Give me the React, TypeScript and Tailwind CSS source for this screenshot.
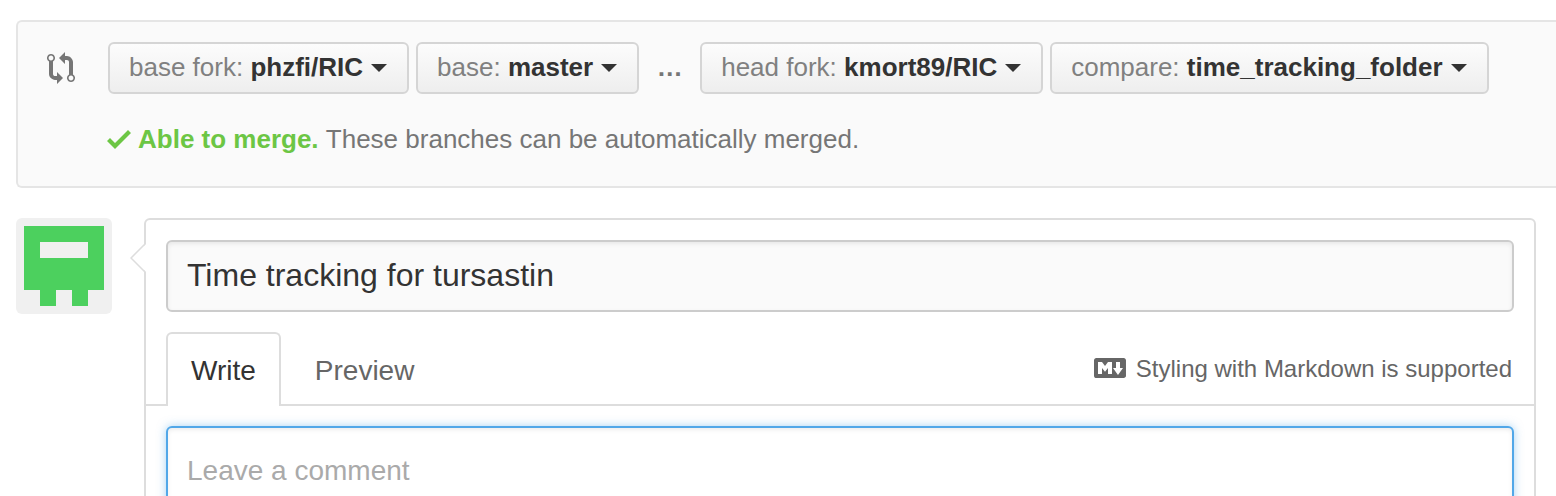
import React from "react";

function CompareIcon() {
  return (
    <svg aria-hidden="true" viewBox="0 0 14 16" className="h-8 w-7 shrink-0 fill-[#767676]">
      <path d="M5 12H4c-.27-.02-.48-.11-.69-.31-.21-.2-.3-.42-.31-.69V4.72A1.993 1.993 0 0 0 2 1a1.993 1.993 0 0 0-1 3.72V11c.03.78.34 1.47.94 2.06.6.59 1.28.91 2.06.94h1v2l3-3-3-3v2zM2 1.8c.66 0 1.2.55 1.2 1.2 0 .65-.55 1.2-1.2 1.2C1.35 4.2.8 3.65.8 3c0-.65.55-1.2 1.2-1.2zm11 9.48V5c-.03-.78-.34-1.47-.94-2.06-.6-.59-1.28-.91-2.06-.94H9V0L6 3l3 3V4h1c.27.02.48.11.69.31.21.2.3.42.31.69v6.28A1.993 1.993 0 0 0 12 15a1.993 1.993 0 0 0 1-3.72zm-1 2.92c-.66 0-1.2-.55-1.2-1.2 0-.65.55-1.2 1.2-1.2.65 0 1.2.55 1.2 1.2 0 .65-.55 1.2-1.2 1.2z" />
    </svg>
  );
}

function CheckIcon() {
  return (
    <svg aria-hidden="true" viewBox="0 0 12 16" className="h-8 w-6 shrink-0 fill-[#6cc644]">
      <path d="M12 5l-8 8-4-4 1.5-1.5L4 10l6.5-6.5z" />
    </svg>
  );
}

function MarkdownIcon() {
  return (
    <svg aria-hidden="true" viewBox="0 0 16 16" className="size-8 shrink-0 fill-[#666666]">
      <path
        fillRule="evenodd"
        d="M14.85 3H1.15C.52 3 0 3.52 0 4.15v7.69C0 12.48.52 13 1.15 13h13.69c.64 0 1.15-.52 1.15-1.15v-7.7C16 3.52 15.48 3 14.85 3zM9 11H7V8L5.5 9.92 4 8v3H2V5h2l1.5 2L7 5h2v6zm2.99.5L9.5 8H11V5h2v3h1.5l-2.51 3.5z"
      />
    </svg>
  );
}

function BranchButton({ label, value }: { label: string; value: string }) {
  return (
    <button
      type="button"
      className="flex h-[52px] items-center rounded-md border-2 border-[#d5d5d5] bg-linear-to-b from-[#fcfcfc] to-[#eeeeee] pr-5 pl-[19px] text-[26px] whitespace-nowrap"
    >
      <span className="pb-0.5 text-[#808080]">{label}:&nbsp;</span>
      <span className="pb-0.5 font-bold text-[#333333]">{value}</span>
      <svg aria-hidden="true" viewBox="0 0 16 8" className="ml-2 h-2 w-4 fill-[#333333]">
        <path d="M0 0h16L8 8z" />
      </svg>
    </button>
  );
}

function Avatar() {
  return (
    <svg role="img" aria-label="Avatar" viewBox="0 0 96 96" className="size-24 shrink-0 rounded-md bg-[#f0f0f0]">
      <path
        fill="#4cd05e"
        fillRule="evenodd"
        d="M8 8h80v64H72v16H56V72H40v16H24V72H8zM24 24v16h48V24z"
      />
    </svg>
  );
}

export default function App() {
  return (
    <main className="h-screen overflow-hidden bg-white pt-5 pl-4 font-['Liberation_Sans',Arial,sans-serif]">
      <section className="flex h-[168px] gap-8 rounded-l-md border-2 border-r-0 border-[#e5e5e5] bg-[#fafafa] pt-5 pl-[29px]">
        <div className="flex h-[52px] items-center">
          <CompareIcon />
        </div>
        <div>
          <div className="flex items-center gap-[7px] pl-px">
            <BranchButton label="base fork" value="phzfi/RIC" />
            <BranchButton label="base" value="master" />
            <span className="w-[47px] pb-0.5 text-center text-[26px] font-bold text-[#767676]">…</span>
            <BranchButton label="head fork" value="kmort89/RIC" />
            <BranchButton label="compare" value="time_tracking_folder" />
          </div>
          <p className="mt-[27px] flex items-center text-[26px] leading-9 whitespace-nowrap text-[#767676]">
            <CheckIcon />
            <strong className="ml-[7px] text-[#6cc644]">Able to merge.</strong>
            <span>&nbsp;These branches can be automatically merged.</span>
          </p>
        </div>
      </section>

      <div className="mt-[30px] mr-5 flex gap-8">
        <Avatar />
        <form className="relative min-w-0 flex-1 rounded-md border-2 border-[#dddddd]">
          <svg aria-hidden="true" viewBox="0 0 16 28" className="absolute top-6 -left-4 h-7 w-4">
            <path d="M16 0L2 14l14 14z" fill="#ffffff" />
            <path d="M15 0L1 14l14 14" fill="none" stroke="#dddddd" strokeWidth="1.5" />
          </svg>
          <div className="px-5 pt-5">
            <input
              aria-label="Title"
              defaultValue="Time tracking for tursastin"
              className="block h-[72px] w-full rounded-md border-2 border-[#cccccc] bg-[#fafafa] px-[19px] pb-0.5 text-[32px] text-[#333333] shadow-[inset_0_2px_4px_rgba(0,0,0,0.075)] outline-none"
            />
          </div>
          <div className="mt-5 flex items-end border-b-2 border-[#dddddd] px-5">
            <div role="tablist" className="-mb-0.5 flex">
              <button
                type="button"
                role="tab"
                aria-selected="true"
                className="h-[74px] rounded-t-md border-2 border-b-0 border-[#dddddd] bg-white px-[23px] pt-0.5 text-[28px] text-[#333333]"
              >
                Write
              </button>
              <button
                type="button"
                role="tab"
                aria-selected="false"
                className="h-[74px] border-t-2 border-transparent px-[34px] pt-0.5 text-[28px] text-[#666666]"
              >
                Preview
              </button>
            </div>
            <a
              href="#markdown"
              className="ml-auto flex h-[72px] items-center gap-2.5 pr-0.5 text-2xl text-[#666666]"
            >
              <MarkdownIcon />
              <span className="pt-0.5">Styling with Markdown is supported</span>
            </a>
          </div>
          <div className="p-5">
            <textarea
              aria-label="Comment"
              placeholder="Leave a comment"
              className="block h-[200px] w-full resize-none rounded-md border-2 border-[#51a7e8] bg-white px-[19px] py-5 text-[28px] leading-[46px] text-[#333333] shadow-[inset_0_2px_4px_rgba(0,0,0,0.075),0_0_10px_rgba(81,167,232,0.5)] outline-none placeholder:text-[#aaaaaa]"
            />
          </div>
        </form>
      </div>
    </main>
  );
}
